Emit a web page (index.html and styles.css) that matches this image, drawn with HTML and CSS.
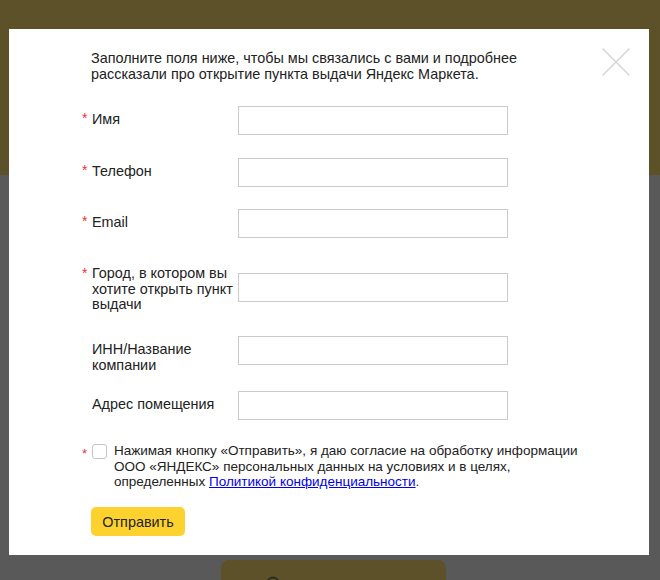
FILE: index.html
```html
<!DOCTYPE html>
<html lang="ru">
<head>
<meta charset="utf-8">
<title>Заявка</title>
<link rel="stylesheet" href="styles.css">
</head>
<body>
<div class="page">
  <header class="hero"></header>
  <main class="content">
    <div class="cta">
      <svg class="cta-icon" width="14" height="14" viewBox="0 0 14 14"><circle cx="7" cy="7" r="5.5" fill="none" stroke="#2e2a1c" stroke-width="2"/></svg>
    </div>
  </main>
</div>

<div class="modal">
  <button class="close" type="button" aria-label="Закрыть">
    <svg width="28" height="28" viewBox="0 0 28 28"><path d="M0.5 0.5 L27.5 27.5 M27.5 0.5 L0.5 27.5" stroke="#d2d2d2" stroke-width="1.3" fill="none"/></svg>
  </button>
  <p class="intro">Заполните поля ниже, чтобы мы связались с вами и подробнее рассказали про открытие пункта выдачи Яндекс Маркета.</p>
  <form class="form">
    <div class="row row-name">
      <span class="req">*</span><label class="label">Имя</label><input class="field" type="text">
    </div>
    <div class="row row-phone">
      <span class="req">*</span><label class="label">Телефон</label><input class="field" type="text">
    </div>
    <div class="row row-email">
      <span class="req">*</span><label class="label">Email</label><input class="field" type="text">
    </div>
    <div class="row row-city">
      <span class="req req-tall">*</span><label class="label label-tall">Город, в котором вы хотите открыть пункт выдачи</label><input class="field field-offset" type="text">
    </div>
    <div class="row row-inn">
      <span class="req"></span><label class="label">ИНН/Название компании</label><input class="field" type="text">
    </div>
    <div class="row row-address">
      <span class="req"></span><label class="label">Адрес помещения</label><input class="field" type="text">
    </div>
    <div class="row consent">
      <span class="req req-consent">*</span><input class="check" type="checkbox">
      <span class="consent-text">Нажимая кнопку «Отправить», я даю согласие на обработку информации<br>ООО «ЯНДЕКС» персональных данных на условиях и в целях,<br>определенных <a class="link" href="#">Политикой конфиденциальности</a>.</span>
    </div>
    <button class="submit" type="button">Отправить</button>
  </form>
</div>
</body>
</html>
```
FILE: styles.css
```css
html, body {
  margin: 0;
  height: 100%;
}
body {
  background: #595959;
  font-family: "Liberation Sans", Arial, sans-serif;
  overflow: hidden;
}
.hero {
  height: 175px;
  background: #5d5129;
}
.content {
  padding: 385px 0 0 221px;
}
.cta {
  width: 225px;
  height: 20px;
  box-sizing: border-box;
  border-radius: 8px 8px 0 0;
  background: #5d5129;
  padding: 16px 0 0 45px;
  overflow: hidden;
}
.cta-icon {
  display: block;
}
.modal {
  position: absolute;
  left: 9px;
  top: 29px;
  width: 640px;
  height: 526px;
  box-sizing: border-box;
  background: #fff;
  padding: 22px 0 0 73px;
}
.close {
  position: absolute;
  top: 19px;
  right: 19px;
  width: 28px;
  height: 28px;
  padding: 0;
  border: 0;
  background: none;
}
.close svg {
  display: block;
}
.intro {
  margin: 0 0 0 9px;
  width: 460px;
  font-size: 14.4px;
  line-height: 15.5px;
  color: #222;
}
.form {
  margin: 0;
  display: flex;
  flex-direction: column;
  align-items: flex-start;
}
.row {
  display: flex;
  align-items: flex-start;
}
.req {
  flex: none;
  width: 10px;
  padding-top: 5px;
  font-size: 14px;
  line-height: 15.5px;
  color: #e8323a;
}
.req-tall {
  padding-top: 0;
}
.label {
  flex: none;
  width: 146px;
  padding-top: 6px;
  font-size: 14.4px;
  line-height: 15.5px;
  color: #222;
}
.label-tall {
  padding-top: 0;
}
.field {
  flex: none;
  width: 270px;
  height: 29px;
  box-sizing: border-box;
  margin: 0;
  padding: 0 8px;
  border: 1px solid #cbcbcb;
  border-radius: 0;
  background: #fff;
  font: inherit;
  font-size: 14px;
  outline: none;
}
.field-offset {
  margin-top: 7px;
}
.row-name { margin-top: 24px; }
.row-phone { margin-top: 23px; }
.row-email { margin-top: 22px; }
.row-city { margin-top: 28px; }
.row-inn { margin-top: 23.5px; }
.row-address { margin-top: 18px; }
.consent { margin-top: 23px; }
.req-consent {
  padding-top: 3px;
  font-size: 13px;
}
.check {
  flex: none;
  appearance: none;
  -webkit-appearance: none;
  width: 15px;
  height: 15px;
  box-sizing: border-box;
  margin: 1px 7px 0 0;
  border: 1px solid #c4c4c4;
  border-radius: 3px;
  background: #fff;
}
.consent-text {
  width: 500px;
  font-size: 13.5px;
  line-height: 15.5px;
  color: #222;
}
.link {
  color: #0000ee;
  text-decoration: underline;
}
.submit {
  margin: 17.5px 0 0 9px;
  width: 94px;
  height: 29px;
  padding: 0;
  border: 0;
  border-radius: 5px;
  background: #fdd22f;
  font-family: inherit;
  font-size: 14.4px;
  color: #222;
}
```
